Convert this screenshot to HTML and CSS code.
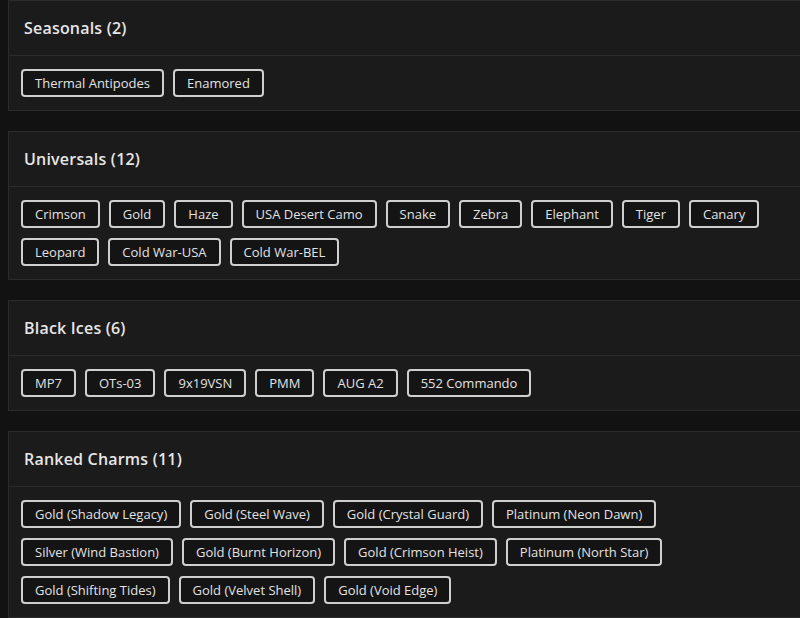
FILE: index.html
```html
<!DOCTYPE html>
<html>
<head>
<meta charset="utf-8">
<link rel="stylesheet" href="styles.css">
</head>
<body>
<div class="page">
  <section class="card">
    <div class="card-head"><h2 class="title">Seasonals (2)</h2></div>
    <div class="card-body">
      <span class="chip">Thermal Antipodes</span>
      <span class="chip">Enamored</span>
    </div>
  </section>
  <section class="card">
    <div class="card-head"><h2 class="title">Universals (12)</h2></div>
    <div class="card-body">
      <span class="chip">Crimson</span>
      <span class="chip">Gold</span>
      <span class="chip">Haze</span>
      <span class="chip">USA Desert Camo</span>
      <span class="chip">Snake</span>
      <span class="chip">Zebra</span>
      <span class="chip">Elephant</span>
      <span class="chip">Tiger</span>
      <span class="chip">Canary</span>
      <span class="chip">Leopard</span>
      <span class="chip">Cold War-USA</span>
      <span class="chip">Cold War-BEL</span>
    </div>
  </section>
  <section class="card">
    <div class="card-head"><h2 class="title">Black Ices (6)</h2></div>
    <div class="card-body">
      <span class="chip">MP7</span>
      <span class="chip">OTs-03</span>
      <span class="chip">9x19VSN</span>
      <span class="chip">PMM</span>
      <span class="chip">AUG A2</span>
      <span class="chip">552 Commando</span>
    </div>
  </section>
  <section class="card">
    <div class="card-head"><h2 class="title">Ranked Charms (11)</h2></div>
    <div class="card-body">
      <span class="chip">Gold (Shadow Legacy)</span>
      <span class="chip">Gold (Steel Wave)</span>
      <span class="chip">Gold (Crystal Guard)</span>
      <span class="chip">Platinum (Neon Dawn)</span>
      <span class="chip">Silver (Wind Bastion)</span>
      <span class="chip">Gold (Burnt Horizon)</span>
      <span class="chip">Gold (Crimson Heist)</span>
      <span class="chip">Platinum (North Star)</span>
      <span class="chip">Gold (Shifting Tides)</span>
      <span class="chip">Gold (Velvet Shell)</span>
      <span class="chip">Gold (Void Edge)</span>
    </div>
  </section>
</div>
</body>
</html>
```

FILE: styles.css
```css
html, body {
  margin: 0;
  padding: 0;
  background: #121212;
  overflow: hidden;
}
body {
  font-family: "Open Sans", "Noto Sans", sans-serif;
  color: #e4e4e4;
}
.page {
  display: flex;
  flex-direction: column;
  gap: 20px;
  padding: 0 0 0 8px;
  margin-right: -20px;
}
.card {
  background: #1b1b1b;
  border: 1px solid #2b2b2b;
}
.card-head {
  padding: 16px 15px;
  border-bottom: 1px solid #2b2b2b;
}
.title {
  margin: 0;
  font-size: 16px;
  line-height: 22px;
  font-weight: 600;
  color: #e6e6e6;
  letter-spacing: 0.2px;
}
.card-body {
  display: flex;
  flex-wrap: wrap;
  gap: 10px 9px;
  padding: 13px 12px;
}
.chip {
  box-sizing: border-box;
  height: 28px;
  display: inline-flex;
  align-items: center;
  padding: 0 12px;
  border: 2px solid #cfcfcf;
  border-radius: 4px;
  background: #141414;
  font-size: 13px;
  color: #e2e2e2;
  white-space: nowrap;
}
```
